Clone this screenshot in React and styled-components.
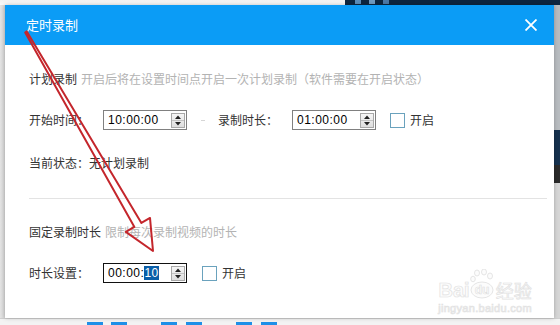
import React from "react";
import styled, { createGlobalStyle, css } from "styled-components";

const Global = createGlobalStyle`
  html, body { margin: 0; padding: 0; background: #e8e8e8; }
  body { font-family: "Noto Sans CJK SC", "Noto Sans", sans-serif; }
  * { box-sizing: border-box; }
`;

const Screen = styled.div`
  position: relative;
  width: 560px;
  height: 325px;
  overflow: hidden;
  display: flex;
  flex-direction: column;
  background: #ebebeb;
`;

const TopBar = styled.div`
  height: 5px;
  display: flex;
`;
const TopLight = styled.div`
  width: 345px;
  background: linear-gradient(#f2f2f2, #fafafa);
`;
const TopDark = styled.div`
  flex: 1;
  background: #0d2640;
  display: flex;
  gap: 8px;
  padding-left: 10px;
  align-items: flex-start;
`;
const TrayDot = styled.span`
  width: 6px;
  height: 4px;
  background: ${(p) => p.$c};
  opacity: 0.8;
`;

const Middle = styled.div`
  flex: 1;
  display: flex;
`;
const LeftGutter = styled.div`
  width: 5px;
  background: linear-gradient(90deg, #e4e4e4, #d4d4d4);
`;
const RightStrip = styled.div`
  width: 6px;
  display: flex;
  flex-direction: column;
`;
const StripPart = styled.div`
  height: ${(p) => p.$h}px;
  flex: ${(p) => (p.$grow ? 1 : "none")};
  background: ${(p) => p.$c};
`;

const Dialog = styled.div`
  flex: 1;
  display: flex;
  flex-direction: column;
  background: #fff;
  box-shadow: 0 0 4px rgba(0, 0, 0, 0.25);
  position: relative;
`;

const Header = styled.div`
  height: 40px;
  background: #0b9cf6;
  display: flex;
  align-items: center;
  justify-content: space-between;
  padding: 0 17px 0 21px;
`;
const Title = styled.div`
  color: #fff;
  font-size: 13px;
  line-height: 20px;
`;
const CloseBtn = styled.svg`
  width: 12px;
  height: 12px;
  display: block;
`;

const Body = styled.div`
  flex: 1;
  display: flex;
  flex-direction: column;
  padding: 24px 7px 0 24px;
  font-size: 12px;
  color: #333;
`;

const Line = styled.div`
  display: flex;
  align-items: center;
  height: 20px;
  line-height: 20px;
  white-space: nowrap;
  margin-top: ${(p) => p.$mt || 0}px;
`;
const Hint = styled.span`
  color: #b3b3b3;
  margin-left: 4px;
`;
const Label = styled.span`
  width: 74px;
  flex: none;
`;
const Divider = styled.div`
  height: 1px;
  background: #e3e3e3;
  margin-top: 25px;
`;

const TimeBox = styled.div`
  width: 84px;
  height: 20px;
  flex: none;
  display: flex;
  align-items: center;
  justify-content: space-between;
  border: 1px solid ${(p) => (p.$focus ? "#111" : "#808080")};
  background: #fff;
  padding: 0 1px 0 4px;
  font-family: "Liberation Sans", Arial, sans-serif;
  font-size: 12px;
  color: #000;
  letter-spacing: 0.5px;
`;
const Sel = styled.span`
  background: #0a5ea8;
  color: #fff;
`;
const SpinBox = styled.div`
  width: 14px;
  height: 15px;
  border: 1px solid #a8a8a8;
  background: linear-gradient(#f6f6f6, #dedede);
  display: flex;
  flex-direction: column;
`;
const SpinHalf = styled.div`
  flex: 1;
  display: flex;
  align-items: center;
  justify-content: center;
  ${(p) =>
    p.$top &&
    css`
      border-bottom: 1px solid #c4c4c4;
    `}
`;

const Dash = styled.span`
  width: 4px;
  height: 1px;
  background: #d6d6d6;
  margin: 0 13px 0 14px;
`;
const Check = styled.span`
  width: 15px;
  height: 15px;
  flex: none;
  border: 1px solid #6aa2bd;
  background: #fff;
  margin-left: ${(p) => p.$ml}px;
  margin-right: 5px;
`;

const Watermark = styled.div`
  position: absolute;
  right: 22px;
  bottom: 4px;
  display: flex;
  flex-direction: column;
  align-items: center;
  font-family: "Liberation Sans", Arial, sans-serif;
  color: #fcfcfc;
  -webkit-text-stroke: 0.7px #e2e2e2;
  pointer-events: none;
`;
const WmTop = styled.div`
  display: flex;
  align-items: flex-end;
  font-size: 20px;
  font-weight: bold;
  line-height: 18px;
`;
const WmCjk = styled.span`
  font-family: "Noto Sans CJK SC", sans-serif;
  font-size: 18px;
  font-weight: normal;
  margin-left: 2px;
`;
const WmSub = styled.div`
  font-size: 11px;
  line-height: 12px;
  margin-top: 3px;
  letter-spacing: 0.3px;
`;

const BottomBar = styled.div`
  height: 7px;
  border-top: 1px solid #cfcfcf;
  background: #f3f3f3;
  display: flex;
  align-items: flex-end;
  padding-left: 87px;
`;
const TaskBtn = styled.span`
  width: 16px;
  height: 3px;
  background: #1e90e8;
  margin-right: ${(p) => p.$mr}px;
`;

const ArrowSvg = styled.svg`
  position: absolute;
  left: 0;
  top: 0;
  pointer-events: none;
`;

function Spinner() {
  return (
    <SpinBox>
      <SpinHalf $top>
        <svg width="6" height="4" viewBox="0 0 6 4">
          <path d="M0 4 L3 0.5 L6 4 Z" fill="#222" />
        </svg>
      </SpinHalf>
      <SpinHalf>
        <svg width="6" height="4" viewBox="0 0 6 4">
          <path d="M0 0 L3 3.5 L6 0 Z" fill="#222" />
        </svg>
      </SpinHalf>
    </SpinBox>
  );
}

export default function App() {
  return (
    <>
      <Global />
      <Screen>
        <TopBar>
          <TopLight />
          <TopDark>
            <TrayDot $c="#6fa8d8" />
            <TrayDot $c="#8ab8e0" />
            <TrayDot $c="#5d8fc0" />
          </TopDark>
        </TopBar>
        <Middle>
          <LeftGutter />
          <Dialog>
            <Header>
              <Title>定时录制</Title>
              <CloseBtn viewBox="0 0 12 12">
                <path d="M0.5 0.5 L11.5 11.5 M11.5 0.5 L0.5 11.5" stroke="#fff" strokeWidth="1.8" />
              </CloseBtn>
            </Header>
            <Body>
              <Line>
                计划录制<Hint>开启后将在设置时间点开启一次计划录制（软件需要在开启状态）</Hint>
              </Line>
              <Line $mt={21}>
                <Label>开始时间：</Label>
                <TimeBox>
                  <span>10:00:00</span>
                  <Spinner />
                </TimeBox>
                <Dash />
                <Label>录制时长：</Label>
                <TimeBox>
                  <span>01:00:00</span>
                  <Spinner />
                </TimeBox>
                <Check $ml={14} />
                开启
              </Line>
              <Line $mt={23}>当前状态：无计划录制</Line>
              <Divider />
              <Line $mt={23}>
                固定录制时长<Hint>限制每次录制视频的时长</Hint>
              </Line>
              <Line $mt={21}>
                <Label>时长设置：</Label>
                <TimeBox $focus>
                  <span>
                    00:00:<Sel>10</Sel>
                  </span>
                  <Spinner />
                </TimeBox>
                <Check $ml={15} />
                开启
              </Line>
            </Body>
            <Watermark>
              <WmTop>
                Bai
                <svg width="24" height="30" viewBox="0 0 24 30">
                  <g fill="#fcfcfc" stroke="#dedede" strokeWidth="0.8">
                    <ellipse cx="7" cy="4" rx="2.5" ry="3" />
                    <ellipse cx="14" cy="3" rx="2.5" ry="3" />
                    <ellipse cx="20" cy="7" rx="2.5" ry="3" />
                    <ellipse cx="3" cy="10" rx="2.3" ry="2.8" />
                    <ellipse cx="12" cy="21" rx="11" ry="8" />
                  </g>
                  <text x="12" y="25" textAnchor="middle" fontSize="12" fontWeight="bold" fontFamily="Liberation Sans, Arial, sans-serif" fill="#fcfcfc" stroke="#dedede" strokeWidth="0.6">du</text>
                </svg>
                <WmCjk>经验</WmCjk>
              </WmTop>
              <WmSub>jingyan.baidu.com</WmSub>
            </Watermark>
          </Dialog>
          <RightStrip>
            <StripPart $h={125} $c="#b8bcc0" />
            <StripPart $h={35} $c="#16324f" />
            <StripPart $h={18} $c="#2b2b2b" />
            <StripPart $grow $c="#d6d6d6" />
          </RightStrip>
        </Middle>
        <BottomBar>
          <TaskBtn $mr={8} />
          <TaskBtn $mr={34} />
          <TaskBtn $mr={9} />
          <TaskBtn $mr={34} />
          <TaskBtn $mr={9} />
          <TaskBtn $mr={0} />
        </BottomBar>
        <ArrowSvg width="560" height="325" viewBox="0 0 560 325">
          <path
            d="M25.2 32.6 L134.4 226.9 L125.8 231.9 L153 251 L150 217.9 L141.4 222.9 L26.8 31.4 Z"
            fill="none"
            stroke="#c4262c"
            strokeWidth="2"
            strokeLinejoin="round"
          />
        </ArrowSvg>
      </Screen>
    </>
  );
}
